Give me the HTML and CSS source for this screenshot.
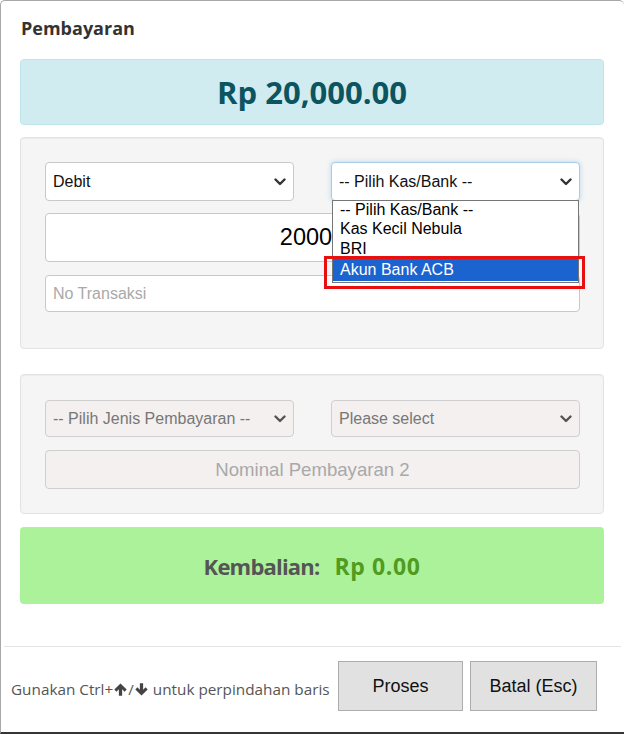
FILE: index.html
```
<!DOCTYPE html>
<html lang="id">
<head>
<meta charset="utf-8">
<title>Pembayaran</title>
<link rel="stylesheet" href="styles.css">
</head>
<body>
<div class="modal">
  <div class="modal-body">
    <h4 class="title">Pembayaran</h4>
    <div class="total">Rp 20,000.00</div>

    <div class="well well-main">
      <div class="row">
        <div class="select">
          <span>Debit</span>
          <svg class="chev" width="12" height="8" viewBox="0 0 12 8"><path d="M1.5 1.5 L6 6 L10.5 1.5" fill="none" stroke="#333" stroke-width="2.4" stroke-linecap="round" stroke-linejoin="round"/></svg>
        </div>
        <div class="select-wrap">
          <div class="select focus">
            <span>-- Pilih Kas/Bank --</span>
            <svg class="chev" width="12" height="8" viewBox="0 0 12 8"><path d="M1.5 1.5 L6 6 L10.5 1.5" fill="none" stroke="#333" stroke-width="2.4" stroke-linecap="round" stroke-linejoin="round"/></svg>
          </div>
          <ul class="dropdown">
            <li>-- Pilih Kas/Bank --</li>
            <li>Kas Kecil Nebula</li>
            <li>BRI</li>
            <li class="active">Akun Bank ACB</li>
          </ul>
          <div class="mark"></div>
        </div>
      </div>
      <div class="input amount">20000</div>
      <div class="input placeholder">No Transaksi</div>
    </div>

    <div class="well well-second">
      <div class="row">
        <div class="select disabled">
          <span>-- Pilih Jenis Pembayaran --</span>
          <svg class="chev" width="12" height="8" viewBox="0 0 12 8"><path d="M1.5 1.5 L6 6 L10.5 1.5" fill="none" stroke="#555" stroke-width="2.4" stroke-linecap="round" stroke-linejoin="round"/></svg>
        </div>
        <div class="select disabled">
          <span>Please select</span>
          <svg class="chev" width="12" height="8" viewBox="0 0 12 8"><path d="M1.5 1.5 L6 6 L10.5 1.5" fill="none" stroke="#555" stroke-width="2.4" stroke-linecap="round" stroke-linejoin="round"/></svg>
        </div>
      </div>
      <div class="input nominal">Nominal Pembayaran 2</div>
    </div>

    <div class="change">
      <span class="change-label">Kembalian:</span>
      <span class="change-value">Rp 0.00</span>
    </div>
  </div>

  <div class="modal-footer">
    <p class="hint">Gunakan Ctrl+<svg class="arrow" width="13" height="13" viewBox="0 0 12 12"><path d="M6 0.4 L11.7 6.1 L9.8 8 L7.5 5.7 V11.7 H4.5 V5.7 L2.2 8 L0.3 6.1 Z" fill="#444"/></svg>/<svg class="arrow" width="13" height="13" viewBox="0 0 12 12"><path d="M6 11.6 L11.7 5.9 L9.8 4 L7.5 6.3 V0.3 H4.5 V6.3 L2.2 4 L0.3 5.9 Z" fill="#444"/></svg> untuk perpindahan baris</p>
    <div class="buttons">
      <button class="btn btn-proses">Proses</button>
      <button class="btn btn-batal">Batal (Esc)</button>
    </div>
  </div>
</div>
</body>
</html>
```

FILE: styles.css
```
html, body {
  margin: 0;
  padding: 0;
  background: #fff;
}

.modal {
  box-sizing: border-box;
  width: 624px;
  height: 734px;
  border: 1px solid #a8a8a8;
  border-bottom: 2px solid #353535;
  border-right: none;
  border-radius: 5px 5px 0 0;
  display: flex;
  flex-direction: column;
  font-family: "Open Sans", "Liberation Sans", sans-serif;
}

.modal-body {
  flex: 1;
  padding: 15px 20px 0 19px;
}

.title {
  margin: 0 0 18px 1px;
  font-size: 18px;
  line-height: 25px;
  font-weight: 700;
  color: #333;
}

.total {
  box-sizing: border-box;
  height: 66px;
  display: flex;
  align-items: center;
  justify-content: center;
  background: #d1ecf1;
  border: 1px solid #bee5eb;
  border-radius: 4px;
  color: #0c5460;
  font-size: 31px;
  font-weight: 700;
}

.well {
  background: #f5f5f5;
  border: 1px solid #e3e3e3;
  border-radius: 4px;
  box-shadow: inset 0 1px 1px rgba(0, 0, 0, 0.04);
}

.well-main {
  margin-top: 12px;
  padding: 24px 23px 36px 24px;
}

.well-second {
  margin-top: 25px;
  padding: 25px 23px 24px 24px;
}

.row {
  display: grid;
  grid-template-columns: 1fr 1fr;
  column-gap: 37px;
}

.select-wrap {
  position: relative;
}

.select {
  box-sizing: border-box;
  height: 39px;
  display: flex;
  align-items: center;
  justify-content: space-between;
  padding: 0 7px 0 7px;
  background: #fff;
  border: 1px solid #c8c8c8;
  border-radius: 4px;
  font-family: "Liberation Sans", Arial, sans-serif;
  font-size: 16px;
  color: #111;
}

.select.focus {
  border-color: #a9cbe6;
  box-shadow: 0 0 5px rgba(102, 175, 233, 0.45);
}

.select.disabled {
  height: 37px;
  background: #f3f0ef;
  border-color: #cfcfcf;
  color: #777;
}

.chev {
  display: block;
  flex: none;
}

.dropdown {
  position: absolute;
  top: 38px;
  left: 1px;
  right: 1px;
  margin: 0;
  padding: 0 0 1px 0;
  list-style: none;
  background: #fff;
  border: 1px solid #767676;
  font-family: "Liberation Sans", Arial, sans-serif;
  font-size: 16px;
  color: #000;
  z-index: 2;
}

.dropdown li {
  line-height: 19px;
  padding-left: 7px;
  white-space: nowrap;
}

.dropdown li:first-child {
  line-height: 18px;
}

.dropdown li:nth-child(3) {
  line-height: 21px;
}

.dropdown li.active {
  line-height: 22px;
  background: #1b64d0;
  color: #fff;
}

.mark {
  position: absolute;
  left: -7px;
  top: 94px;
  width: 261px;
  height: 33px;
  box-sizing: border-box;
  border: 3px solid #e8100f;
  z-index: 3;
}

.input {
  box-sizing: border-box;
  background: #fff;
  border: 1px solid #c8c8c8;
  border-radius: 4px;
  font-family: "Liberation Sans", Arial, sans-serif;
}

.amount {
  margin-top: 12px;
  height: 49px;
  line-height: 47px;
  text-align: center;
  font-size: 23.5px;
  color: #000;
}

.placeholder {
  margin-top: 13px;
  height: 37px;
  line-height: 35px;
  padding-left: 7px;
  font-size: 16px;
  color: #a9a9a9;
}

.nominal {
  margin-top: 13px;
  height: 39px;
  line-height: 37px;
  text-align: center;
  background: #f3f0ef;
  border-color: #cfcfcf;
  font-size: 18.6px;
  color: #a9a9a9;
}

.change {
  box-sizing: border-box;
  margin-top: 13px;
  height: 77px;
  display: flex;
  align-items: center;
  justify-content: center;
  background: #acf29a;
  border-radius: 4px;
  font-size: 22px;
  font-weight: 700;
}

.change-label {
  color: #555;
  letter-spacing: -0.8px;
}

.change-value {
  margin-left: 15px;
  font-size: 23px;
  color: #509b20;
  letter-spacing: 0.6px;
}

.modal-footer {
  box-sizing: border-box;
  height: 86px;
  margin: 0 3px;
  border-top: 1px solid #e3e3e3;
  padding: 14px 24px 0 7px;
  display: flex;
  align-items: flex-start;
  justify-content: space-between;
}

.hint {
  margin: 0;
  padding-top: 3px;
  line-height: 50px;
  font-size: 15.3px;
  color: #555;
  white-space: nowrap;
}

.arrow {
  display: inline-block;
  margin: 0 1px;
  vertical-align: -1px;
}

.buttons {
  display: flex;
  gap: 7px;
}

.btn {
  box-sizing: border-box;
  height: 50px;
  margin: 0;
  padding: 0;
  background: #e1e1e1;
  border: 1px solid #adadad;
  border-radius: 0;
  font-family: "Liberation Sans", Arial, sans-serif;
  font-size: 18px;
  color: #111;
}

.btn-proses {
  width: 125px;
}

.btn-batal {
  width: 127px;
}
```
